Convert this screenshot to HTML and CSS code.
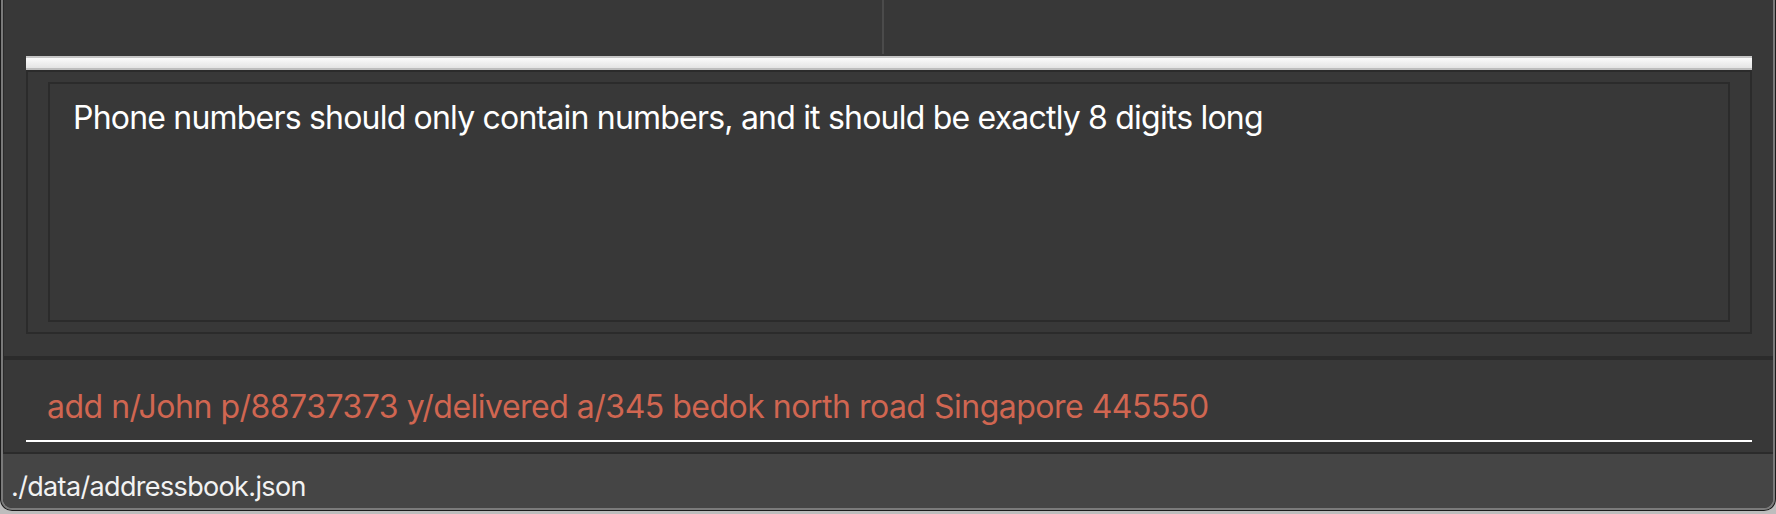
FILE: index.html
```html
<!DOCTYPE html>
<html>
<head>
<meta charset="utf-8">
<link rel="stylesheet" href="styles.css">
</head>
<body>
<div class="window">
  <div class="frame">
    <div class="top">
      <div class="top-pane left"></div>
      <div class="top-divider"></div>
      <div class="top-pane right"></div>
    </div>
    <div class="splitter"></div>
    <div class="result-outer">
      <div class="result-inner">
        <p class="result-text">Phone numbers should only contain numbers, and it should be exactly 8 digits long</p>
      </div>
    </div>
    <div class="gap"></div>
    <div class="sep thick"></div>
    <div class="command">
      <div class="command-field">
        <span class="command-text error">add n/John p/88737373 y/delivered a/345 bedok north road Singapore 445550</span>
      </div>
    </div>
    <div class="sep"></div>
    <div class="status">./data/addressbook.json</div>
  </div>
</div>
</body>
</html>
```

FILE: styles.css
```css
html, body {
  margin: 0;
  padding: 0;
}
body {
  width: 1776px;
  height: 514px;
  background: #bdbdbd;
  font-family: "Inter", "Liberation Sans", sans-serif;
  overflow: hidden;
}
.window {
  width: 1776px;
  height: 511px;
  box-sizing: border-box;
  padding: 0 1px 1px 1px;
  background: #1c1c1c;
  border-radius: 0 0 12px 12px;
}
.frame {
  height: 100%;
  box-sizing: border-box;
  border: 2px solid #7a7a7a;
  border-top: 0;
  border-radius: 0 0 11px 11px;
  background: #383838;
  overflow: hidden;
  display: flex;
  flex-direction: column;
  box-shadow: inset 1px 0 0 #2a2a2a;
}
.top {
  height: 56px;
  display: flex;
  flex-shrink: 0;
}
.top-pane.left {
  width: 879px;
}
.top-divider {
  width: 2px;
  height: 54px;
  background: #4b4b4b;
}
.top-pane.right {
  flex: 1;
}
.splitter {
  height: 14px;
  margin: 0 21px 0 23px;
  box-sizing: border-box;
  border-top: 2px solid #c6c6c6;
  border-bottom: 2px solid #bdbdbd;
  background: linear-gradient(#fbfbfb, #e4e4e4);
  flex-shrink: 0;
}
.result-outer {
  height: 264px;
  margin: 0 21px 0 23px;
  box-sizing: border-box;
  border: 2px solid #2b2b2b;
  padding: 10px 20px;
  flex-shrink: 0;
}
.result-inner {
  height: 100%;
  box-sizing: border-box;
  border: 2px solid #2b2b2b;
  padding: 14px 23px;
}
.result-text {
  margin: 0;
  color: #ffffff;
  font-size: 32px;
  letter-spacing: -0.8px;
  line-height: 40px;
}
.gap {
  height: 22px;
  flex-shrink: 0;
}
.sep {
  height: 2px;
  background: #2b2b2b;
  flex-shrink: 0;
}
.sep.thick {
  height: 4px;
}
.command {
  height: 92px;
  box-sizing: border-box;
  padding: 0 21px 0 23px;
  flex-shrink: 0;
}
.command-field {
  height: 82px;
  box-sizing: border-box;
  border-bottom: 2px solid #ffffff;
  padding: 27px 0 0 21px;
}
.command-text {
  display: block;
  font-size: 32px;
  letter-spacing: -0.5px;
  line-height: 40px;
}
.error {
  color: #d06651;
}
.status {
  flex: 1;
  background: #454545;
  color: #f2f2f2;
  font-size: 27px;
  letter-spacing: -0.65px;
  line-height: 30px;
  padding: 18px 0 0 8px;
}
```
